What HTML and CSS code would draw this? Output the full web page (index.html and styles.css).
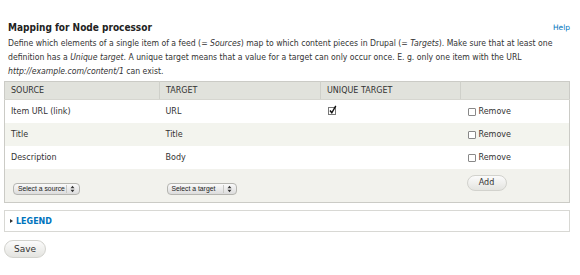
FILE: index.html
```html
<!DOCTYPE html>
<html lang="en">
<head>
    <meta charset="UTF-8">
    <title>Mapping for Node processor</title>
    <link rel="stylesheet" href="styles.css">
</head>
<body>
    <div class="page">
        <div class="title-bar">
            <h2>Mapping for Node processor</h2>
            <a href="#" class="help">Help</a>
        </div>
        <p class="intro">Define which elements of a single item of a feed (= <em>Sources</em>) map to which content pieces in Drupal (= <em>Targets</em>). Make sure that at least one definition has a <em>Unique target</em>. A unique target means that a value for a target can only occur once. E. g. only one item with the URL <em>http://example.com/content/1</em> can exist.</p>

        <table class="mapping">
            <thead>
                <tr>
                    <th class="col-source">SOURCE</th>
                    <th class="col-target">TARGET</th>
                    <th class="col-unique">UNIQUE TARGET</th>
                    <th class="col-op"></th>
                </tr>
            </thead>
            <tbody>
                <tr class="odd">
                    <td>Item URL (link)</td>
                    <td>URL</td>
                    <td>
                        <svg class="checked" width="9" height="10" viewBox="0 0 9 10">
                            <rect x="0.5" y="2.5" width="7" height="7" fill="#fff" stroke="#777"/>
                            <path d="M2 5.5 L3.8 7.8 L7.8 0.8" fill="none" stroke="#111" stroke-width="1.4"/>
                        </svg>
                    </td>
                    <td><label class="remove"><span class="box"></span>Remove</label></td>
                </tr>
                <tr class="even">
                    <td>Title</td>
                    <td>Title</td>
                    <td></td>
                    <td><label class="remove"><span class="box"></span>Remove</label></td>
                </tr>
                <tr class="odd">
                    <td>Description</td>
                    <td>Body</td>
                    <td></td>
                    <td><label class="remove"><span class="box"></span>Remove</label></td>
                </tr>
                <tr class="even add-row">
                    <td>
                        <span class="select source-select">Select a source
                            <svg class="arrows" width="7" height="8" viewBox="0 0 7 8">
                                <path d="M1.5 3.2 L3.5 0.8 L5.5 3.2 Z M1.5 4.8 L3.5 7.2 L5.5 4.8 Z" fill="#333"/>
                            </svg>
                        </span>
                    </td>
                    <td>
                        <span class="select target-select">Select a target
                            <svg class="arrows" width="7" height="8" viewBox="0 0 7 8">
                                <path d="M1.5 3.2 L3.5 0.8 L5.5 3.2 Z M1.5 4.8 L3.5 7.2 L5.5 4.8 Z" fill="#333"/>
                            </svg>
                        </span>
                    </td>
                    <td></td>
                    <td><button type="button" class="button add">Add</button></td>
                </tr>
            </tbody>
        </table>

        <div class="legend">
            <a href="#"><span class="arrow"></span>LEGEND</a>
        </div>

        <button type="button" class="button save">Save</button>
    </div>
</body>
</html>
```

FILE: styles.css
```css
body {
    margin: 0;
    padding: 0;
    background-color: #fff;
    font-family: "DejaVu Sans", sans-serif;
    font-size: 8px;
    color: #333;
}

.page {
    width: 566px;
    margin-left: 4px;
    padding-top: 20px;
}

.title-bar {
    display: flex;
    justify-content: space-between;
    align-items: center;
    padding-left: 4px;
    height: 14px;
}

h2 {
    margin: 0;
    font-family: "DejaVu Sans Condensed", "DejaVu Sans", sans-serif;
    font-size: 10px;
    font-weight: bold;
    color: #222;
    line-height: 14px;
    padding-top: 1px;
}

.help {
    color: #0074bd;
    text-decoration: none;
    font-size: 7.5px;
    line-height: 10px;
    margin-top: 2px;
}

.intro {
    margin: 2px 0 0 0;
    padding-left: 4px;
    font-family: "DejaVu Sans Condensed", "DejaVu Sans", sans-serif;
    font-size: 8.6px;
    line-height: 14px;
}

.mapping {
    margin-top: 3px;
    width: 566px;
    border-collapse: collapse;
    border: 1px solid #cbcbc6;
    table-layout: fixed;
}

.mapping th {
    background-color: #e1e2dc;
    font-weight: normal;
    text-align: left;
    height: 17px;
    padding: 0 6px;
    border-left: 1px solid #cfd0ca;
    border-bottom: 1px solid #d6d6d0;
    color: #333;
}

.mapping th:first-child {
    border-left: none;
}

.col-source { width: 142px; }
.col-target { width: 148px; }
.col-unique { width: 127px; }

.mapping td {
    height: 23px;
    padding: 0 6px;
    vertical-align: middle;
}

.mapping tr.odd td {
    background-color: #fff;
}

.mapping tr.even td {
    background-color: #f3f4ee;
}

.mapping tr.add-row td {
    height: 33px;
    background-color: #f2f2ed;
}

.checked {
    display: block;
    margin-left: 1px;
    margin-top: -3px;
}

.remove {
    display: flex;
    align-items: center;
    padding-left: 1px;
}

.remove .box {
    width: 6px;
    height: 6px;
    border: 1px solid #888;
    border-radius: 1px;
    background-color: #fff;
    margin-right: 3px;
}

.select {
    display: inline-flex;
    align-items: center;
    justify-content: space-between;
    box-sizing: border-box;
    height: 12px;
    padding: 0 3px 0 4px;
    border: 1px solid #b5b5b0;
    border-radius: 4px;
    background: linear-gradient(#fafafa, #dcdcdc);
    font-family: "Liberation Sans", sans-serif;
    font-size: 6.8px;
    white-space: nowrap;
    color: #222;
    margin-top: 6px;
}

.source-select {
    width: 67px;
    margin-left: 2px;
}

.target-select {
    width: 70px;
    margin-left: 1px;
}

.select .arrows {
    border-left: 1px solid #c8c8c4;
    padding-left: 2px;
}

.button {
    display: block;
    border: 1px solid #d2d2cd;
    border-radius: 9px;
    background: linear-gradient(#fbfbfb, #e4e4e0);
    font-family: "DejaVu Sans", sans-serif;
    color: #333;
    padding: 0;
    cursor: pointer;
}

.add {
    width: 40px;
    height: 16px;
    font-size: 8px;
    margin: -6px 0 0 0;
}

.legend {
    margin-top: 7px;
    height: 20px;
    border: 1px solid #d8d8d4;
    display: flex;
    align-items: center;
    padding-left: 5px;
}

.legend a {
    display: flex;
    align-items: center;
    color: #0074bd;
    font-weight: bold;
    font-size: 8px;
    text-decoration: none;
}

.legend .arrow {
    width: 0;
    height: 0;
    border-left: 3px solid #333;
    border-top: 2.5px solid transparent;
    border-bottom: 2.5px solid transparent;
    margin-right: 3px;
}

.save {
    margin-top: 8px;
    width: 42px;
    height: 18px;
    font-size: 9px;
}
```
